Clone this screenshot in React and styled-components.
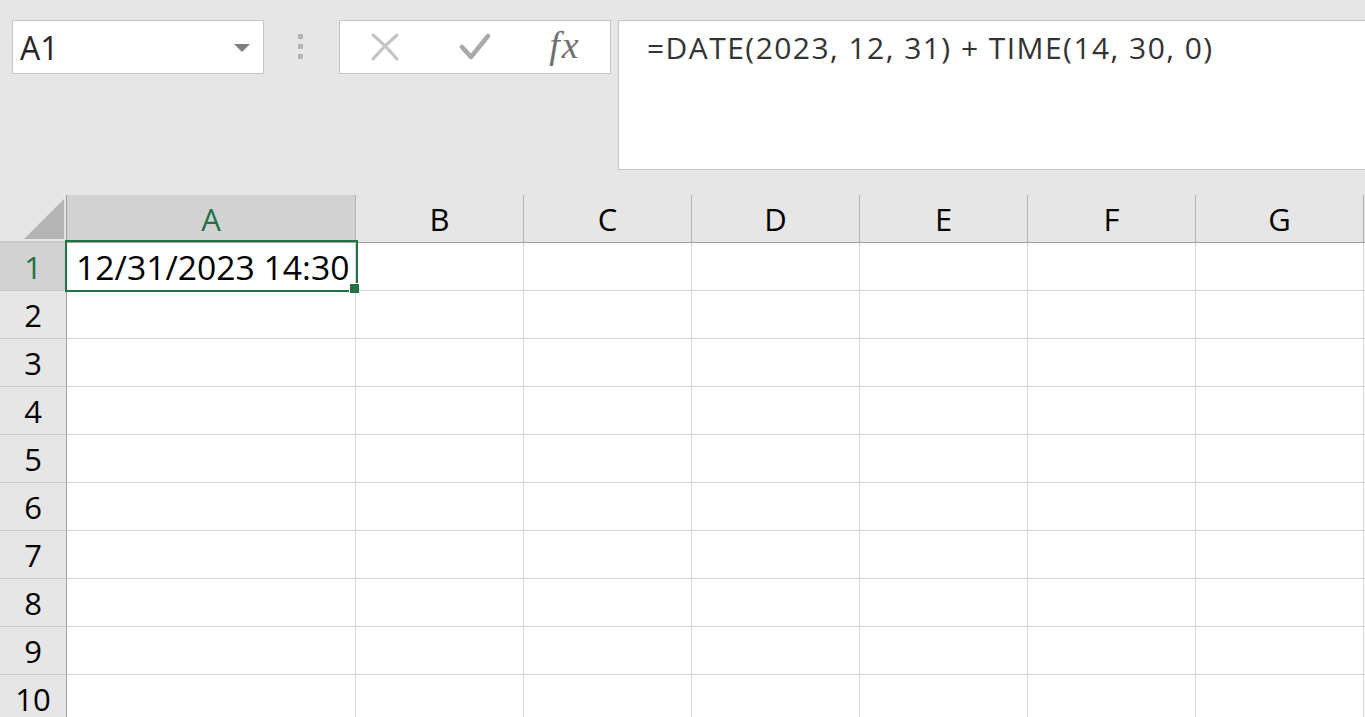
import styled, { createGlobalStyle } from 'styled-components';

const GlobalStyle = createGlobalStyle`
  html, body {
    margin: 0;
    padding: 0;
    background: #ffffff;
    overflow: hidden;
  }
  body {
    font-family: "Open Sans", "Noto Sans", sans-serif;
  }
`;

const GREEN = '#217346';

const Toolbar = styled.div`
  height: 195px;
  background: #e6e6e6;
  display: flex;
  align-items: flex-start;
  padding: 20px 0 0 12px;
  box-sizing: border-box;
  overflow: hidden;
`;

const NameBox = styled.div`
  width: 252px;
  height: 54px;
  box-sizing: border-box;
  background: #fff;
  border: 1px solid #c6c6c6;
  display: flex;
  align-items: center;
  justify-content: space-between;
  padding: 0 13px 0 7px;
  font-size: 32px;
  color: #262626;
`;

const Caret = styled.span`
  width: 0;
  height: 0;
  border-left: 8.5px solid transparent;
  border-right: 8.5px solid transparent;
  border-top: 8px solid #7f7f7f;
  margin-top: 2px;
`;

const Grip = styled.div`
  display: flex;
  flex-direction: column;
  gap: 5px;
  margin: 14px 36px 0 34px;
  span {
    width: 5px;
    height: 5px;
    background: #b4b4b4;
  }
`;

const ActionBox = styled.div`
  width: 272px;
  height: 54px;
  box-sizing: border-box;
  background: #fff;
  border: 1px solid #c6c6c6;
  display: grid;
  grid-template-columns: repeat(3, 90px);
  align-items: center;
  justify-items: center;
`;

const Fx = styled.span`
  font-family: "Liberation Serif", serif;
  font-style: italic;
  font-size: 38px;
  letter-spacing: 2px;
  color: #6f6f6f;
  line-height: 1;
  margin-top: -4px;
`;

const FormulaBox = styled.div`
  flex: 1;
  height: 150px;
  margin-left: 7px;
  margin-right: -4px;
  box-sizing: border-box;
  background: #fff;
  border: 1px solid #c6c6c6;
  padding: 7px 0 0 28px;
  font-size: 30px;
  letter-spacing: 1.45px;
  color: #333;
  line-height: 40px;
  white-space: nowrap;
`;

const Sheet = styled.div`
  position: relative;
  display: grid;
  grid-template-columns: 67px 289px repeat(6, 168px) 1fr;
  grid-auto-rows: 48px;
`;

const Cell = styled.div`
  box-sizing: border-box;
  border-right: 1px solid #d4d4d4;
  border-bottom: 1px solid #d4d4d4;
  display: flex;
  align-items: center;
  padding-left: 9px;
  font-size: 33.7px;
  color: #000;
  white-space: nowrap;
  overflow: visible;
`;

const ColHead = styled.div`
  box-sizing: border-box;
  background: ${p => (p.$active ? '#d2d2d2' : '#e6e6e6')};
  color: ${p => (p.$active ? GREEN : '#000')};
  border-right: 1px solid #b4b4b4;
  border-bottom: 1px solid #9e9e9e;
  display: flex;
  align-items: center;
  justify-content: center;
  font-size: 31px;
  padding-top: 1px;
`;

const RowHead = styled.div`
  box-sizing: border-box;
  background: ${p => (p.$active ? '#d2d2d2' : '#e6e6e6')};
  color: ${p => (p.$active ? GREEN : '#000')};
  border-right: 1px solid #9e9e9e;
  border-bottom: 1px solid #c8c8c8;
  display: flex;
  align-items: center;
  justify-content: center;
  font-size: 31px;
`;

const Corner = styled.div`
  box-sizing: border-box;
  background: #e6e6e6;
  border-right: 1px solid #9e9e9e;
  border-bottom: 2px solid #c8c8c8;
  svg { display: block; }
`;

const Selection = styled.div`
  position: absolute;
  left: 65px;
  top: 45px;
  width: 293px;
  height: 52px;
  box-sizing: border-box;
  border: 2px solid ${GREEN};
  pointer-events: none;
`;

const FillHandle = styled.span`
  position: absolute;
  right: -3px;
  bottom: -3px;
  width: 10px;
  height: 10px;
  box-sizing: border-box;
  background: ${GREEN};
  border-left: 1px solid #fff;
  border-top: 1px solid #fff;
`;

const columns = ['A', 'B', 'C', 'D', 'E', 'F', 'G', ''];
const rows = [1, 2, 3, 4, 5, 6, 7, 8, 9, 10];

export default function App() {
  return (
    <div>
      <GlobalStyle />
      <Toolbar>
        <NameBox>
          A1
          <Caret />
        </NameBox>
        <Grip>
          <span />
          <span />
          <span />
        </Grip>
        <ActionBox>
          <svg width="30" height="30" viewBox="0 0 30 30">
            <path d="M3 3 Q14 12 27 27 M27 3 Q14 14 3 27" stroke="#c3c3c3" strokeWidth="3" fill="none" strokeLinecap="round" />
          </svg>
          <svg width="32" height="28" viewBox="0 0 32 28">
            <path d="M3 14 L12 24 L29 3" stroke="#a9a9a9" strokeWidth="4.5" fill="none" strokeLinecap="round" strokeLinejoin="round" />
          </svg>
          <Fx>fx</Fx>
        </ActionBox>
        <FormulaBox>=DATE(2023, 12, 31) + TIME(14, 30, 0)</FormulaBox>
      </Toolbar>
      <Sheet>
        <Corner>
          <svg width="66" height="46" viewBox="0 0 66 46">
            <polygon points="24,44 64,44 64,4" fill="#b4b4b4" />
          </svg>
        </Corner>
        {columns.map((c, i) => (
          <ColHead key={'h' + i} $active={c === 'A'}>{c}</ColHead>
        ))}
        {rows.map(r => (
          <>
            <RowHead key={'r' + r} $active={r === 1}>{r}</RowHead>
            {columns.map((c, i) => (
              <Cell key={r + '-' + i}>{r === 1 && c === 'A' ? '12/31/2023 14:30' : ''}</Cell>
            ))}
          </>
        ))}
        <Selection>
          <FillHandle />
        </Selection>
      </Sheet>
    </div>
  );
}
